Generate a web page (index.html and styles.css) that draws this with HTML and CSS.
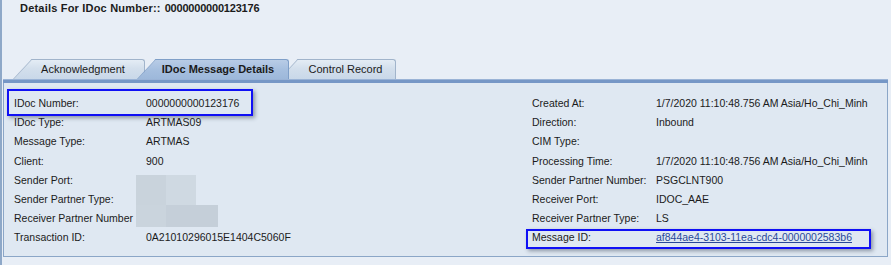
FILE: index.html
```html
<!DOCTYPE html>
<html>
<head>
<meta charset="utf-8">
<link rel="stylesheet" href="styles.css">
</head>
<body>
<div class="frame">
  <div class="title"><span class="title-label">Details For IDoc Number::</span><span class="title-value">0000000000123176</span></div>
  <div class="tabs">
    <div class="tab tab-ack">Acknowledgment</div>
    <div class="tab tab-sel">IDoc Message Details</div>
    <div class="tab tab-ctrl">Control Record</div>
  </div>
  <div class="tabbar"></div>
  <div class="panel">
    <div class="grid">
      <div class="lbl">IDoc Number:</div><div class="val">0000000000123176</div>
      <div class="lbl">Created At:</div><div class="val">1/7/2020 11:10:48.756 AM Asia/Ho_Chi_Minh</div>

      <div class="lbl">IDoc Type:</div><div class="val">ARTMAS09</div>
      <div class="lbl">Direction:</div><div class="val">Inbound</div>

      <div class="lbl">Message Type:</div><div class="val">ARTMAS</div>
      <div class="lbl">CIM Type:</div><div class="val"></div>

      <div class="lbl">Client:</div><div class="val">900</div>
      <div class="lbl">Processing Time:</div><div class="val">1/7/2020 11:10:48.756 AM Asia/Ho_Chi_Minh</div>

      <div class="lbl">Sender Port:</div><div class="val"></div>
      <div class="lbl">Sender Partner Number:</div><div class="val">PSGCLNT900</div>

      <div class="lbl">Sender Partner Type:</div><div class="val"></div>
      <div class="lbl">Receiver Port:</div><div class="val">IDOC_AAE</div>

      <div class="lbl">Receiver Partner Number</div><div class="val"></div>
      <div class="lbl">Receiver Partner Type:</div><div class="val">LS</div>

      <div class="lbl">Transaction ID:</div><div class="val">0A21010296015E1404C5060F</div>
      <div class="lbl">Message ID:</div><div class="val"><a class="link" href="#">af844ae4-3103-11ea-cdc4-0000002583b6</a></div>
    </div>
    <div class="redact r1"></div>
    <div class="redact r2"></div>
    <div class="redact r3"></div>
    <div class="redact r4"></div>
    <div class="mark mark-idoc"></div>
    <div class="mark mark-msg"></div>
  </div>
</div>
</body>
</html>
```

FILE: styles.css
```css
html, body {
  margin: 0;
  padding: 0;
  background: #e8eef6;
}

.frame {
  width: 891px;
  height: 265px;
  box-sizing: border-box;
  border-left: 2px solid #8ea8c8;
  font-family: "Liberation Sans", Arial, sans-serif;
  color: #1b1b1b;
  overflow: hidden;
}

.title {
  display: flex;
  font-size: 11px;
  font-weight: bold;
  line-height: 13px;
  padding: 2px 0 0 18px;
  height: 56px;
  box-sizing: border-box;
  white-space: nowrap;
}

.title-label {
  letter-spacing: 0.2px;
}

.title-value {
  margin-left: 4px;
  letter-spacing: -0.2px;
}

.tabs {
  display: flex;
  height: 20px;
  padding-left: 30px;
  margin-top: 3px;
  font-size: 11px;
  line-height: 19px;
}

.tab {
  position: relative;
  height: 20px;
  box-sizing: border-box;
  border-top: 1px solid #a1b4cb;
  border-right: 1px solid #a1b4cb;
  border-top-right-radius: 3px;
  background: linear-gradient(#e4ecf5, #d3dfec 45%, #c9d8e9);
  text-align: center;
  z-index: 1;
}

.tab::before {
  content: "";
  position: absolute;
  top: -1px;
  bottom: 0;
  left: -19px;
  width: 40px;
  border-left: 1px solid #a1b4cb;
  border-top: 1px solid #a1b4cb;
  background: linear-gradient(#e4ecf5, #d3dfec 45%, #c9d8e9);
  transform: skewX(-43deg);
  transform-origin: bottom left;
  z-index: -1;
}

.tab-ack {
  width: 113px;
  padding-right: 10px;
  margin-left: 0;
}

.tab-sel {
  width: 133px;
  padding-right: 8px;
  margin-left: 11px;
  font-weight: bold;
  z-index: 3;
  border-color: #7f9fc8;
  background: linear-gradient(#b8cce6, #a6bfdf 50%, #9db8da);
}

.tab-sel::before {
  border-color: #7f9fc8;
  background: linear-gradient(#b8cce6, #a6bfdf 50%, #9db8da);
}

.tab-ctrl {
  width: 98px;
  margin-left: 9px;
  padding-right: 2px;
  z-index: 2;
}

.tabbar {
  margin-left: 1px;
  width: 885px;
  height: 4px;
  box-sizing: border-box;
  border-top: 1px solid #9ab3d6;
  background: #7697c6;
  position: relative;
  z-index: 4;
}

.panel {
  position: relative;
  margin-left: 1px;
  width: 885px;
  height: 174px;
  box-sizing: border-box;
  background: #dfe8f2;
  border-left: 1px solid #8ba6c7;
  border-right: 1px solid #8ba6c7;
  border-bottom: 1px solid #8ba6c7;
  padding: 11px 0 0 10px;
}

.grid {
  display: grid;
  grid-template-columns: 132px 386px 124px auto;
  grid-auto-rows: 19.2px;
  font-size: 10.5px;
  line-height: 19px;
  white-space: nowrap;
}

.link {
  color: #28489a;
  text-decoration: underline;
}

.redact {
  position: absolute;
}

.r1 { left: 132px; top: 92px; width: 30px; height: 30px; background: #c9d3dc; }
.r2 { left: 162px; top: 92px; width: 30px; height: 30px; background: #cfd9e2; }
.r3 { left: 132px; top: 122px; width: 30px; height: 22px; background: #cad4dd; }
.r4 { left: 162px; top: 122px; width: 52px; height: 22px; background: #c5cfd9; }

.mark {
  position: absolute;
  border: 2px solid #1010f5;
  box-shadow: 2px 2px 4px rgba(40, 50, 70, 0.45);
}

.mark-idoc {
  left: 3px;
  top: 6px;
  width: 242px;
  height: 23px;
}

.mark-msg {
  left: 522px;
  top: 146px;
  width: 341px;
  height: 16px;
}
```
